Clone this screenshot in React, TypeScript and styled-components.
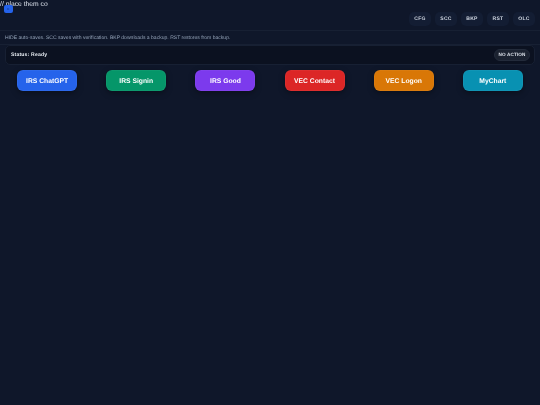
import React from "react";
import styled, { createGlobalStyle } from "styled-components";

const Global = createGlobalStyle`
  html, body { margin: 0; padding: 0; height: 100%; background: #0f172a; }
  #root { min-height: 405px; }
  * { box-sizing: border-box; }
`;

const Page = styled.div`
  position: relative;
  width: 540px;
  height: 405px;
  overflow: hidden;
  background: #0f172a;
  font-family: "Liberation Sans", sans-serif;
  text-rendering: geometricPrecision;
  filter: blur(0.35px);
`;

const Snippet = styled.div`
  position: absolute;
  left: 0;
  top: 1px;
  font: 6.75px/8px "Liberation Sans", sans-serif;
  color: #dbe2ec;
  white-space: nowrap;
`;

const Handle = styled.div`
  position: absolute;
  left: 4px;
  top: 5px;
  width: 8.5px;
  height: 8px;
  border-radius: 2px;
  background: #2563eb;
  color: #0f3a94;
  font: 700 3px/8px "Liberation Sans", sans-serif;
  text-align: center;
`;

const Toolbar = styled.div`
  height: 31px;
  padding: 12px 5px 0 0;
  display: flex;
  justify-content: flex-end;
  gap: 4px;
  border-bottom: 1px solid #172033;
`;

const ToolButton = styled.div`
  width: 22px;
  height: 14px;
  border-radius: 5px;
  background: #131d33;
  color: #d3dae5;
  font: 700 5.06px/15px "Liberation Sans", sans-serif;
  letter-spacing: 0.25px;
  text-align: center;
`;

const Hint = styled.div`
  height: 14px;
  padding-left: 5px;
  border-bottom: 1px solid #172033;
  color: #94a3b8;
  font: 5.06px/15px "Liberation Sans", sans-serif;
  white-space: nowrap;
`;

const StatusBar = styled.div`
  height: 20px;
  margin: 0 5px;
  padding: 0 4px 0 5px;
  display: flex;
  align-items: center;
  justify-content: space-between;
  border: 1px solid #172033;
  border-radius: 5px;
  background: #0b1120;
`;

const StatusText = styled.span`
  margin-top: 2px;
  color: #e8edf3;
  font: 700 5.06px/1 "Liberation Sans", sans-serif;
  letter-spacing: 0.2px;
`;

const ActionPill = styled.span`
  width: 36px;
  height: 12px;
  border-radius: 6px;
  border: 1px solid #232b3b;
  background: #1b2230;
  color: #dde2ea;
  font: 700 4.65px/10px "Liberation Sans", sans-serif;
  letter-spacing: 0.1px;
  text-align: center;
`;

const LaunchRow = styled.div`
  margin-top: 5px;
  padding: 0 2.5px;
  display: flex;
  justify-content: space-around;
`;

const Launch = styled.div<{ $bg: string }>`
  width: 60px;
  height: 21px;
  border: 1px solid rgba(255, 255, 255, 0.04);
  border-radius: 6px;
  background: ${(p) => p.$bg};
  box-shadow: 0 2px 6px rgba(0, 0, 0, 0.35);
  color: #fff;
  font: 700 6.75px/21px "Liberation Sans", sans-serif;
  text-align: center;
`;

const tools = ["CFG", "SCC", "BKP", "RST", "OLC"];
const links = [
  ["IRS ChatGPT", "#2563eb"],
  ["IRS Signin", "#059669"],
  ["IRS Good", "#7c3aed"],
  ["VEC Contact", "#dc2626"],
  ["VEC Logon", "#d97706"],
  ["MyChart", "#0891b2"],
];

export default function App() {
  return (
    <Page>
      <Global />
      <Snippet>// place them co</Snippet>
      <Handle>K</Handle>
      <Toolbar>
        {tools.map((t) => (
          <ToolButton key={t}>{t}</ToolButton>
        ))}
      </Toolbar>
      <Hint>HIDE auto-saves. SCC saves with verification. BKP downloads a backup. RST restores from backup.</Hint>
      <StatusBar>
        <StatusText>Status: Ready</StatusText>
        <ActionPill>NO ACTION</ActionPill>
      </StatusBar>
      <LaunchRow>
        {links.map(([label, bg]) => (
          <Launch key={label} $bg={bg}>{label}</Launch>
        ))}
      </LaunchRow>
    </Page>
  );
}
